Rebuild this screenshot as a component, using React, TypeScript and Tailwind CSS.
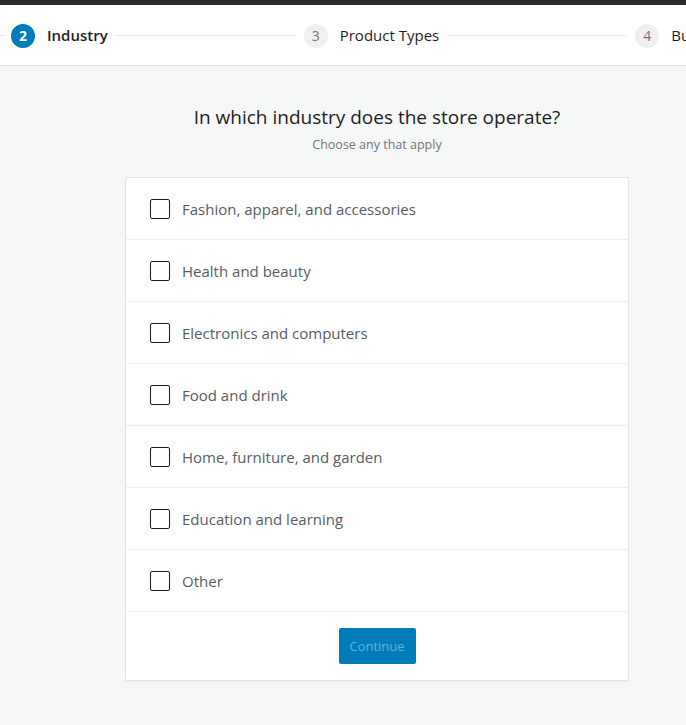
const FONT = { fontFamily: '"Open Sans", "Noto Sans", sans-serif' }

const INDUSTRIES = [
  'Fashion, apparel, and accessories',
  'Health and beauty',
  'Electronics and computers',
  'Food and drink',
  'Home, furniture, and garden',
  'Education and learning',
  'Other',
]

function Step({ n, label, active }: { n: number; label: string; active?: boolean }) {
  return (
    <div className="flex shrink-0 items-center gap-[12px]">
      <span
        className={
          active
            ? 'flex h-[24px] w-[24px] items-center justify-center rounded-full bg-[#007cba] text-[14px] font-bold text-white'
            : 'flex h-[24px] w-[24px] items-center justify-center rounded-full bg-[#f0f0f0] text-[14px] text-[#757575]'
        }
      >
        {n}
      </span>
      <span className={active ? 'text-[15px] font-semibold text-[#1e1e1e]' : 'text-[15px] text-[#1e1e1e]'}>
        {label}
      </span>
    </div>
  )
}

function Line() {
  return <div className="mx-[8px] h-px w-[180px] shrink-0 bg-[#e8e8e8]" />
}

export default function App() {
  return (
    <div className="min-h-[725px] w-[686px] overflow-hidden bg-[#f6f7f7]" style={FONT}>
      <div className="h-[5px] bg-[#2b2b2d]" />

      {/* Stepper */}
      <div className="flex h-[61px] items-center overflow-hidden border-b border-[#e0e0e0] bg-white pt-[1px]">
        <div className="mr-[7px] h-px w-[4px] shrink-0 bg-[#e8e8e8]" />
        <Step n={2} label="Industry" active />
        <Line />
        <Step n={3} label="Product Types" />
        <Line />
        <Step n={4} label="Business Details" />
      </div>

      {/* Content */}
      <div className="ml-[125px] w-[504px] pt-[37px]">
        <h2 className="text-center text-[19px] leading-[28px] text-[#1e1e1e]">
          In which industry does the store operate?
        </h2>
        <p className="mt-[5px] text-center text-[12.5px] leading-[18px] text-[#757575]">Choose any that apply</p>

        <div className="mt-[23px] rounded-[2px] border border-[#e2e4e7] bg-white shadow-[0_1px_1px_rgba(0,0,0,0.04)]">
          {INDUSTRIES.map((item) => (
            <label key={item} className="flex h-[62px] items-center gap-[12px] border-b border-[#eeeeee] px-[24px]">
              <span className="h-[20px] w-[20px] shrink-0 rounded-[2px] border border-[#1e1e1e] bg-white" />
              <span className="pt-[2px] text-[15px] text-[#555d66]">{item}</span>
            </label>
          ))}
          <div className="flex h-[68px] items-center justify-center">
            <button className="h-[36px] w-[77px] rounded-[2px] bg-[#007cba] pt-[2px] text-[13px] text-[#66b0d9]">
              Continue
            </button>
          </div>
        </div>
      </div>
    </div>
  )
}
